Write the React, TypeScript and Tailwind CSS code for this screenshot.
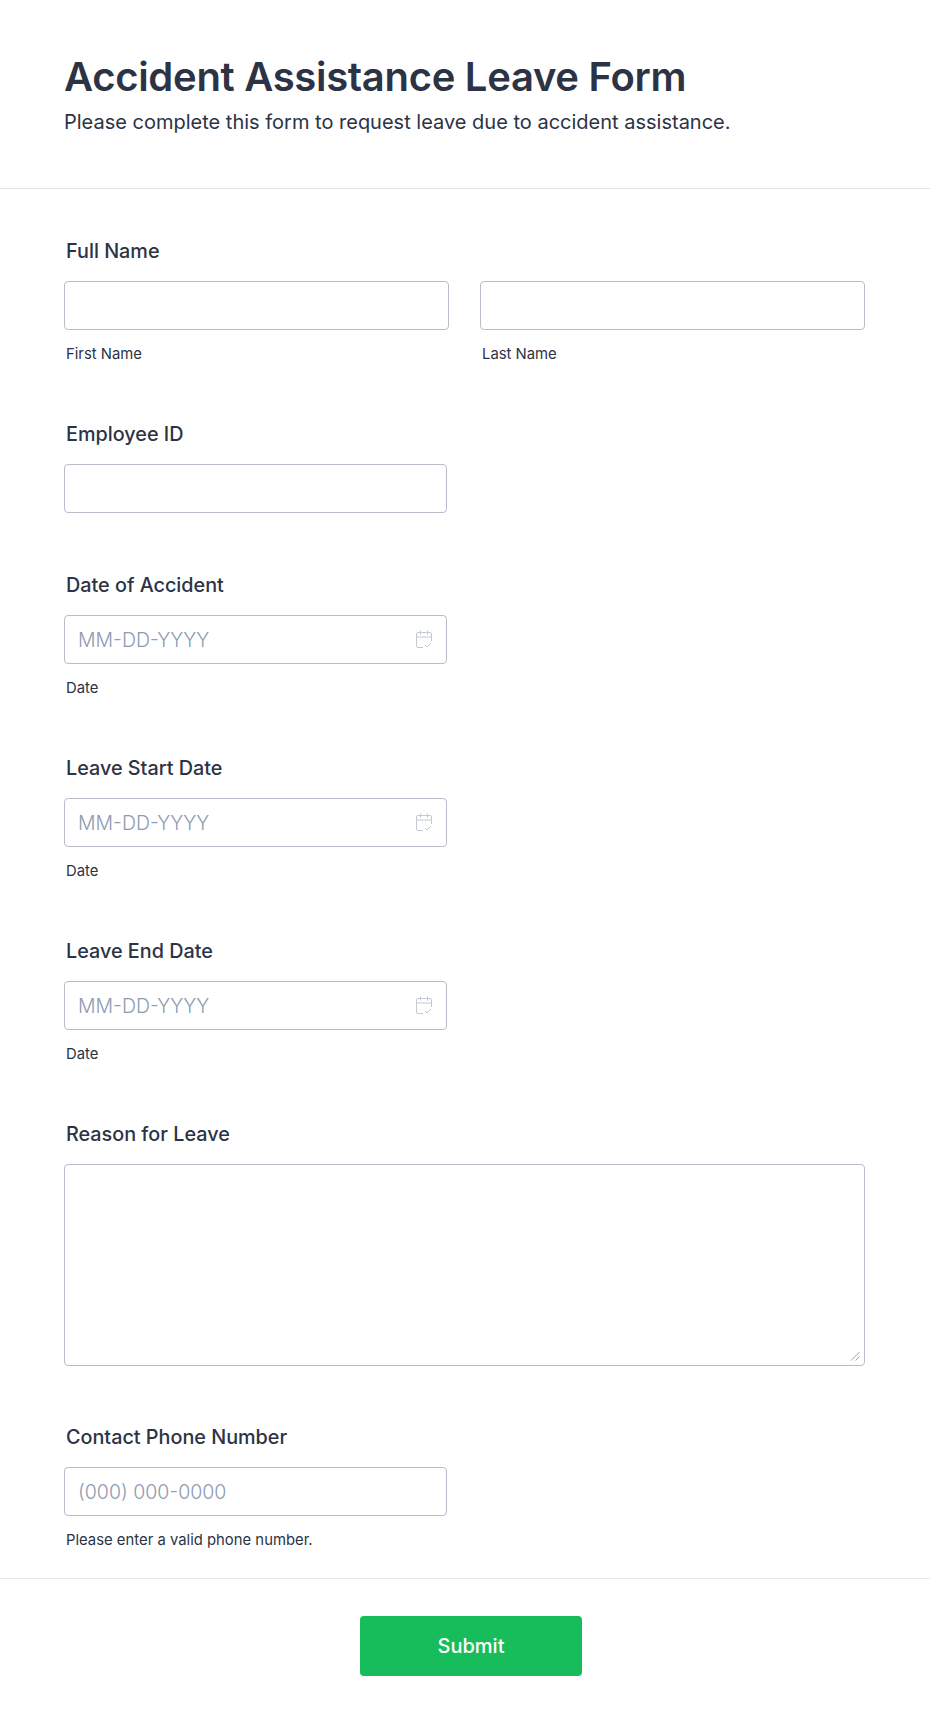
import React from 'react';

const inputClass =
  'block h-[49px] w-full rounded-[4px] border border-[#b8bdc9] bg-white px-[13px] text-[19.5px] font-light text-[#2c3345] outline-none placeholder:text-[#8d9bb0]';

const Label = ({ children }: { children: React.ReactNode }) => (
  <label className="mb-[18px] block h-[24px] pl-[2px] text-[19.8px] leading-[24px] font-medium text-[#2c3345]">{children}</label>
);

const Sub = ({ children }: { children: React.ReactNode }) => (
  <div className="mt-[14px] h-[19px] pl-[2px] text-[14.85px] leading-[20px] text-[#2c3345]">{children}</div>
);

const CalendarIcon = () => (
  <svg width="16" height="18" viewBox="0 0 16 18" fill="none" stroke="#c3c8d3" className="absolute top-[15px] right-[15px]">
    <path d="M7 17.5H2A1.5 1.5 0 0 1 .5 16V4A1.5 1.5 0 0 1 2 2.5h12A1.5 1.5 0 0 1 15.5 4v7" />
    <path d="M.5 7h15M4.500 .5v4M11.500 .5v4" />
    <path d="M9 15l2 2 4-4" />
  </svg>
);

const DateField = ({ label }: { label: string }) => (
  <div className="mb-[59px] w-[383px]">
    <Label>{label}</Label>
    <div className="relative">
      <input className={inputClass} placeholder="MM-DD-YYYY" />
      <CalendarIcon />
    </div>
    <Sub>Date</Sub>
  </div>
);

export default function App() {
  return (
    <div className="h-[1725px] bg-white font-['Inter',sans-serif]">
      <header className="h-[189px] border-b border-[#dde1e9] pt-[51px] pl-[64px]">
        <h1 className="text-[40px] leading-[52px] font-semibold tracking-[-0.3px] text-[#2c3345]">Accident Assistance Leave Form</h1>
        <p className="mt-[5px] text-[20px] leading-[28px] text-[#2c3345]">Please complete this form to request leave due to accident assistance.</p>
      </header>
      <main className="pt-[50px] pr-[65px] pl-[64px]">
        <div className="mb-[59px]">
          <Label>Full Name</Label>
          <div className="grid grid-cols-2 gap-[31px]">
            <div>
              <input className={inputClass} />
              <Sub>First Name</Sub>
            </div>
            <div>
              <input className={inputClass} />
              <Sub>Last Name</Sub>
            </div>
          </div>
        </div>
        <div className="mb-[60px] w-[383px]">
          <Label>Employee ID</Label>
          <input className={inputClass} />
        </div>
        <DateField label="Date of Accident" />
        <DateField label="Leave Start Date" />
        <DateField label="Leave End Date" />
        <div className="mb-[59px]">
          <Label>Reason for Leave</Label>
          <div className="relative">
            <textarea className="block h-[202px] w-full resize-none rounded-[4px] border border-[#b8bdc9] bg-white outline-none" />
            <svg width="10" height="10" viewBox="0 0 10 10" fill="none" stroke="#9ca3af" className="absolute right-[5px] bottom-[5px]">
              <path d="M1 9.5L9.5 1M5.5 9.5L9.5 5.5" />
            </svg>
          </div>
        </div>
        <div className="w-[383px]">
          <Label>Contact Phone Number</Label>
          <input className={inputClass} placeholder="(000) 000-0000" />
          <Sub>Please enter a valid phone number.</Sub>
        </div>
      </main>
      <footer className="mt-[29px] flex justify-center border-t border-[#e5e9f0] pt-[37px] pl-[12px]">
        <button className="h-[60px] w-[222px] rounded-[4px] bg-[#18bd5b] text-[20px] font-medium text-white">Submit</button>
      </footer>
    </div>
  );
}
